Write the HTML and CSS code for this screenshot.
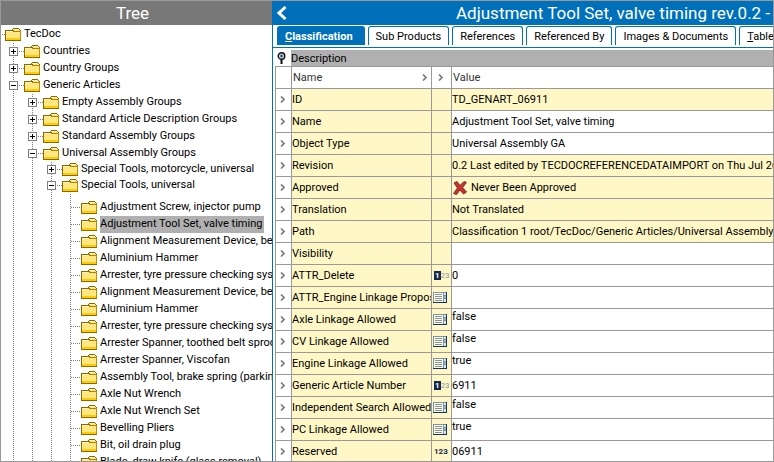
FILE: index.html
```html
<!DOCTYPE html>
<html lang="en">
<head>
<meta charset="utf-8">
<title>Adjustment Tool Set, valve timing</title>
<link rel="stylesheet" href="styles.css">
</head>
<body>
<svg class="defs" aria-hidden="true">
  <symbol id="folder" viewBox="0 0 16 13">
    <path d="M0 2h7v-1h1v-1h6v1h1v1h1v11h-16z" fill="#8a6a00"/>
    <path d="M1 3h8v-1h6v10h-14z" fill="#ffe680"/>
    <path d="M8 1h6v1h-6z" fill="#fff3b8"/>
    <path d="M1 3h7v1h-7z" fill="#fff3b8"/>
    <path d="M8 3h7v1h-7z" fill="#a88400"/>
    <path d="M1 10h14v2h-14z" fill="#ffcc00"/>
    <path d="M15 3h1v9h-1z" fill="#b89000"/>
  </symbol>
  <symbol id="chev" viewBox="0 0 5 7"><path d="M1 0.5L4 3.5L1 6.5" fill="none" stroke="#7c7c7c" stroke-width="1.7"/></symbol>
  <symbol id="list" viewBox="0 0 14 11">
    <path d="M0 0h14v11h-14z" fill="#7d93a5"/>
    <path d="M1 1h9v9h-9z" fill="#fffde8"/>
    <path d="M2 2h7v1h-7zM2 4h7v1h-7zM2 6h7v1h-7zM2 8h7v1h-7z" fill="#84949a"/>
    <path d="M0 10h14v1h-14zM13 0h1v11h-1z" fill="#14365e"/>
    <path d="M11 1h2v2h-2zM11 7h2v3h-2z" fill="#dbe8f2"/>
    <path d="M11 4h2v2h-2z" fill="#9ab4cc"/>
  </symbol>
  <symbol id="cross" viewBox="0 0 14 14">
    <path d="M1 2L4 0.5L7 4.5L11 0.5L13.5 1.5L9.5 6.5L13.5 11L10.5 13L7 9L3.5 13.5L0.5 12.5L4.5 7z" fill="#c8322c" stroke="#7c3030" stroke-width="1"/>
  </symbol>
</svg>
<div class="app">
  <aside class="tree-panel">
    <h2 class="bar">Tree</h2>
    <div class="tree">
      <div class="node root"><i class="dots"></i><svg class="folder"><use href="#folder"/></svg><span class="label">TecDoc</span></div>
      <ul>
        <li><div class="node"><button class="toggle plus" aria-label="Expand"></button><i class="dots"></i><svg class="folder"><use href="#folder"/></svg><span class="label">Countries</span></div></li>
        <li><div class="node"><button class="toggle plus" aria-label="Expand"></button><i class="dots"></i><svg class="folder"><use href="#folder"/></svg><span class="label">Country Groups</span></div></li>
        <li><div class="node"><button class="toggle" aria-label="Collapse"></button><i class="dots"></i><svg class="folder"><use href="#folder"/></svg><span class="label">Generic Articles</span></div>
          <ul>
            <li><div class="node"><button class="toggle plus" aria-label="Expand"></button><i class="dots"></i><svg class="folder"><use href="#folder"/></svg><span class="label">Empty Assembly Groups</span></div></li>
            <li><div class="node"><button class="toggle plus" aria-label="Expand"></button><i class="dots"></i><svg class="folder"><use href="#folder"/></svg><span class="label">Standard Article Description Groups</span></div></li>
            <li><div class="node"><button class="toggle plus" aria-label="Expand"></button><i class="dots"></i><svg class="folder"><use href="#folder"/></svg><span class="label">Standard Assembly Groups</span></div></li>
            <li><div class="node"><button class="toggle" aria-label="Collapse"></button><i class="dots"></i><svg class="folder"><use href="#folder"/></svg><span class="label">Universal Assembly Groups</span></div>
              <ul class="tight">
                <li><div class="node"><button class="toggle plus" aria-label="Expand"></button><i class="dots"></i><svg class="folder"><use href="#folder"/></svg><span class="label">Special Tools, motorcycle, universal</span></div></li>
                <li><div class="node"><button class="toggle" aria-label="Collapse"></button><i class="dots"></i><svg class="folder"><use href="#folder"/></svg><span class="label">Special Tools, universal</span></div>
                  <ul class="leaves">
                    <li><div class="node"><i class="dots"></i><svg class="folder"><use href="#folder"/></svg><span class="label">Adjustment Screw, injector pump</span></div></li>
                    <li><div class="node"><i class="dots"></i><svg class="folder"><use href="#folder"/></svg><span class="label selected">Adjustment Tool Set, valve timing</span></div></li>
                    <li><div class="node"><i class="dots"></i><svg class="folder"><use href="#folder"/></svg><span class="label">Alignment Measurement Device, belt</span></div></li>
                    <li><div class="node"><i class="dots"></i><svg class="folder"><use href="#folder"/></svg><span class="label">Aluminium Hammer</span></div></li>
                    <li><div class="node"><i class="dots"></i><svg class="folder"><use href="#folder"/></svg><span class="label">Arrester, tyre pressure checking system</span></div></li>
                    <li><div class="node"><i class="dots"></i><svg class="folder"><use href="#folder"/></svg><span class="label">Alignment Measurement Device, belt</span></div></li>
                    <li><div class="node"><i class="dots"></i><svg class="folder"><use href="#folder"/></svg><span class="label">Aluminium Hammer</span></div></li>
                    <li><div class="node"><i class="dots"></i><svg class="folder"><use href="#folder"/></svg><span class="label">Arrester, tyre pressure checking system</span></div></li>
                    <li><div class="node"><i class="dots"></i><svg class="folder"><use href="#folder"/></svg><span class="label">Arrester Spanner, toothed belt sprocket</span></div></li>
                    <li><div class="node"><i class="dots"></i><svg class="folder"><use href="#folder"/></svg><span class="label">Arrester Spanner, Viscofan</span></div></li>
                    <li><div class="node"><i class="dots"></i><svg class="folder"><use href="#folder"/></svg><span class="label">Assembly Tool, brake spring (parking)</span></div></li>
                    <li><div class="node"><i class="dots"></i><svg class="folder"><use href="#folder"/></svg><span class="label">Axle Nut Wrench</span></div></li>
                    <li><div class="node"><i class="dots"></i><svg class="folder"><use href="#folder"/></svg><span class="label">Axle Nut Wrench Set</span></div></li>
                    <li><div class="node"><i class="dots"></i><svg class="folder"><use href="#folder"/></svg><span class="label">Bevelling Pliers</span></div></li>
                    <li><div class="node"><i class="dots"></i><svg class="folder"><use href="#folder"/></svg><span class="label">Bit, oil drain plug</span></div></li>
                    <li><div class="node"><i class="dots"></i><svg class="folder"><use href="#folder"/></svg><span class="label">Blade, draw knife (glass removal)</span></div></li>
                  </ul>
                </li>
              </ul>
            </li>
          </ul>
        </li>
      </ul>
    </div>
  </aside>
  <main class="detail">
    <header class="bar title-bar">
      <button class="back" aria-label="Back"><svg viewBox="0 0 12 14"><path d="M9.500 1L3 7L9.500 13" fill="none" stroke="#fff" stroke-width="3"/></svg></button>
      <h1>Adjustment Tool Set, valve timing rev.0.2 - Classification</h1>
    </header>
    <nav class="tabs" role="tablist">
      <button role="tab" class="tab active" aria-selected="true"><u>C</u>lassification</button>
      <button role="tab" class="tab">Sub Products</button>
      <button role="tab" class="tab">References</button>
      <button role="tab" class="tab">Referenced By</button>
      <button role="tab" class="tab">Images &amp; Documents</button>
      <button role="tab" class="tab"><u>T</u>ables</button>
    </nav>
    <section class="sheet">
      <div class="section-head"><svg class="pin" viewBox="0 0 9 12"><path d="M3.500 7h2v5h-2z" fill="#111"/><circle cx="4.500" cy="4" r="3.300" fill="#b9cbd8" stroke="#111" stroke-width="1.400"/><circle cx="4.500" cy="4" r="1.200" fill="#29465a"/></svg><h3>Description</h3></div>
      <table>
        <colgroup><col class="c-mark"><col class="c-name"><col class="c-type"><col></colgroup>
        <thead><tr><td></td><th><span class="head">Name<svg class="chev"><use href="#chev"/></svg></span></th><td class="mark"><svg class="chev"><use href="#chev"/></svg></td><th class="value-head">Value</th></tr></thead>
        <tbody>
          <tr><td class="mark"><svg class="chev"><use href="#chev"/></svg></td><th>ID</th><td class="type"></td><td class="ro">TD_GENART_06911</td></tr>
          <tr><td class="mark"><svg class="chev"><use href="#chev"/></svg></td><th>Name</th><td class="type"></td><td>Adjustment Tool Set, valve timing</td></tr>
          <tr><td class="mark"><svg class="chev"><use href="#chev"/></svg></td><th>Object Type</th><td class="type"></td><td>Universal Assembly GA</td></tr>
          <tr><td class="mark"><svg class="chev"><use href="#chev"/></svg></td><th>Revision</th><td class="type"></td><td class="ro">0.2 Last edited by TECDOCREFERENCEDATAIMPORT on Thu Jul 26</td></tr>
          <tr><td class="mark"><svg class="chev"><use href="#chev"/></svg></td><th>Approved</th><td class="type"></td><td class="ro"><span class="state"><svg class="cross"><use href="#cross"/></svg>Never Been Approved</span></td></tr>
          <tr><td class="mark"><svg class="chev"><use href="#chev"/></svg></td><th>Translation</th><td class="type"></td><td class="ro">Not Translated</td></tr>
          <tr><td class="mark"><svg class="chev"><use href="#chev"/></svg></td><th>Path</th><td class="type"></td><td class="ro">Classification 1 root/TecDoc/Generic Articles/Universal Assembly Groups</td></tr>
          <tr><td class="mark"><svg class="chev"><use href="#chev"/></svg></td><th>Visibility</th><td class="type"></td><td></td></tr>
          <tr><td class="mark"><svg class="chev"><use href="#chev"/></svg></td><th>ATTR_Delete</th><td class="type"><span class="num"><b>1</b>23</span></td><td>0</td></tr>
          <tr><td class="mark"><svg class="chev"><use href="#chev"/></svg></td><th>ATTR_Engine Linkage Proposed</th><td class="type"><svg class="list"><use href="#list"/></svg></td><td></td></tr>
          <tr><td class="mark"><svg class="chev"><use href="#chev"/></svg></td><th>Axle Linkage Allowed</th><td class="type"><svg class="list"><use href="#list"/></svg></td><td class="lov">false</td></tr>
          <tr><td class="mark"><svg class="chev"><use href="#chev"/></svg></td><th>CV Linkage Allowed</th><td class="type"><svg class="list"><use href="#list"/></svg></td><td class="lov">false</td></tr>
          <tr><td class="mark"><svg class="chev"><use href="#chev"/></svg></td><th>Engine Linkage Allowed</th><td class="type"><svg class="list"><use href="#list"/></svg></td><td class="lov">true</td></tr>
          <tr><td class="mark"><svg class="chev"><use href="#chev"/></svg></td><th>Generic Article Number</th><td class="type"><span class="num"><b>1</b>23</span></td><td>6911</td></tr>
          <tr><td class="mark"><svg class="chev"><use href="#chev"/></svg></td><th>Independent Search Allowed</th><td class="type"><svg class="list"><use href="#list"/></svg></td><td class="lov">false</td></tr>
          <tr><td class="mark"><svg class="chev"><use href="#chev"/></svg></td><th>PC Linkage Allowed</th><td class="type"><svg class="list"><use href="#list"/></svg></td><td class="lov">true</td></tr>
          <tr><td class="mark"><svg class="chev"><use href="#chev"/></svg></td><th>Reserved</th><td class="type"><span class="num text">123</span></td><td>06911</td></tr>
        </tbody>
      </table>
    </section>
  </main>
</div>
</body>
</html>
```
FILE: styles.css
```css
* { box-sizing: border-box; }
body {
  margin: 0;
  font: 11px/17px Tahoma, Roboto, sans-serif;
  color: #000;
  background: #fff;
}
button { font: inherit; color: inherit; margin: 0; padding: 0; }
.defs { display: none; }
.app {
  display: grid;
  grid-template-columns: 271px minmax(0, 1fr);
  height: 100vh;
  border: 1px solid #999;
  overflow: hidden;
}
.tree-panel, .detail { overflow: hidden; min-width: 0; }
.detail { border-left: 1px solid #0070bb; }
.bar {
  height: 24px;
  margin: 0;
  padding-right: 8px;
  font-size: 17px;
  font-weight: 400;
  line-height: 24px;
  color: #fff;
  background: #787878;
  text-align: center;
}

.tree { padding-top: 1px; }
.tree ul {
  list-style: none;
  margin: 0 0 0 19px;
  padding: 0;
  background: repeating-linear-gradient(#808080 0 1px, transparent 1px 2px) 4px 0 / 1px 100% no-repeat;
}
.tree > ul { margin-left: 8px; }
.node { display: flex; align-items: center; height: 17px; white-space: nowrap; }
.tight > li:first-child > .node { height: 15px; }
.tree .leaves { padding-top: 5px; }
.dots {
  flex: none;
  width: 6px;
  height: 1px;
  background: repeating-linear-gradient(90deg, transparent 0 1px, #808080 1px 2px);
}
.root .dots { width: 4px; }
.leaves .dots { width: 11px; margin-left: 4px; }
.folder { flex: none; width: 16px; height: 13px; margin-right: 3px; }
.label { padding: 0 2px 2px 0; line-height: 15px; }
.selected { background: #b0b0b0; }
.toggle {
  flex: none;
  width: 9px;
  height: 9px;
  border: 1px solid #808080;
  background: linear-gradient(#000, #000) center / 5px 1px no-repeat, #fff;
}
.plus {
  background: linear-gradient(#000, #000) center / 5px 1px no-repeat,
    linear-gradient(#000, #000) center / 1px 5px no-repeat, #fff;
}

.title-bar { display: flex; padding: 0; background: #0070bb; }
.title-bar h1 { margin: 0 0 0 168px; font: inherit; white-space: nowrap; }
.back { display: flex; align-items: center; width: 16px; border: 0; background: none; padding-left: 3px; }
.back svg { width: 12px; height: 14px; }
.tabs {
  display: flex;
  gap: 3px;
  height: 23px;
  padding: 1px 0 2px 4px;
  border-bottom: 1px solid #0070bb;
  overflow: hidden;
}
.tab {
  flex: none;
  padding: 0 7px;
  border: 1px solid #0070bb;
  border-bottom: 0;
  border-radius: 3px 3px 0 0;
  background: #fff;
  white-space: nowrap;
}
.active { padding: 0 11px 0 7px; background: #0070bb; color: #fff; font-weight: 700; }

.sheet { padding: 2px 0 0 2px; }
.section-head { display: flex; height: 16px; }
.pin { width: 9px; height: 12px; margin: 2px 5px 0 2px; }
.section-head h3 { flex: 1; margin: 0; font: inherit; background: #b0b0b0; }
table { width: 100%; table-layout: fixed; border-collapse: separate; border-spacing: 0; }
.c-mark { width: 16px; }
.c-name { width: 140px; }
.c-type { width: 20px; }
td, th {
  height: 22px;
  padding: 0;
  border: 0 solid #999;
  border-width: 1px 0 0 1px;
  font-weight: 400;
  text-align: left;
  white-space: nowrap;
  overflow: hidden;
}
thead { color: #333; }
.value-head { padding-left: 1px; }
tbody th, .type, .ro { background: #fff8c6; }
td svg { display: block; margin: 0 auto; }
.mark { padding-right: 2px; }
.type { padding-left: 1px; }
.type svg { margin: 0; }
.chev { width: 5px; height: 7px; }
.head { display: flex; align-items: center; justify-content: space-between; padding: 0 4px 0 1px; }
.list { width: 14px; height: 11px; }
.state { display: flex; align-items: center; gap: 4px; padding-left: 1px; }
.state .cross { width: 14px; height: 14px; margin: 0; }
.lov { vertical-align: top; line-height: 16px; }
.num { display: block; padding-left: 1px; font-size: 8px; line-height: 10px; color: #8795a0; }
.num b { padding: 0 1px; color: #fff; background: #14294e; }
.text { color: #14294e; font-weight: 700; }
```
